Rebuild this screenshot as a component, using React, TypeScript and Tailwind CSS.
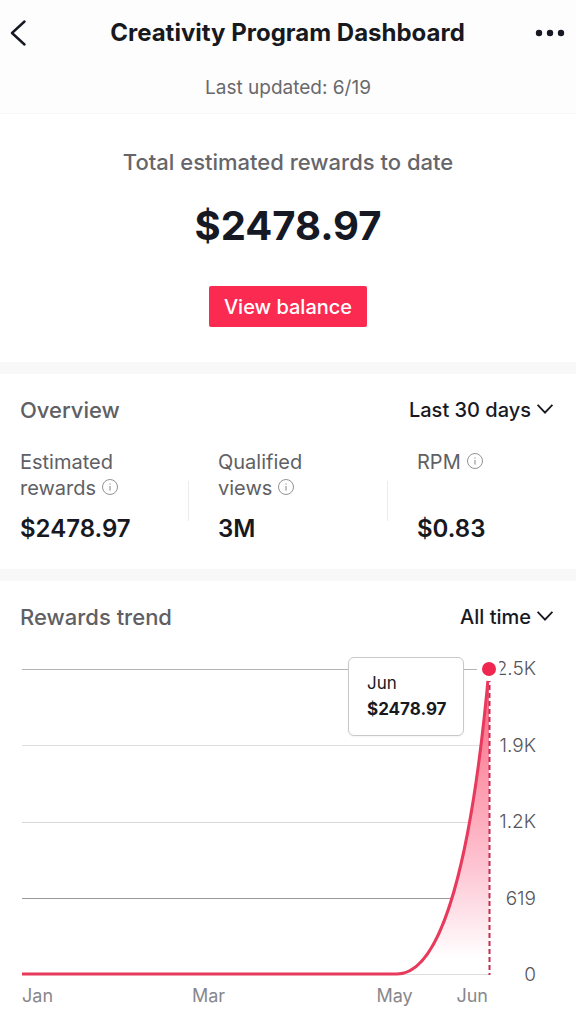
import { useState } from "react";

const metrics = [
  { id: "rewards", lines: ["Estimated", "rewards"], value: "$2478.97" },
  { id: "views", lines: ["Qualified", "views"], value: "3M" },
  { id: "rpm", lines: ["RPM"], value: "$0.83" },
];

const yLabels = ["2.5K", "1.9K", "1.2K", "619", "0"];

const gridLines = [
  { y: 0, color: "#b4b4b6" },
  { y: 76, color: "#dedee0" },
  { y: 153, color: "#d8d8da" },
  { y: 229, color: "#98989a" },
  { y: 305, color: "#dedee0" },
];

function InfoIcon() {
  return (
    <svg viewBox="0 0 16 16" className="mb-[2px] h-4 w-4" fill="none" stroke="#77777a" aria-hidden="true">
      <circle cx="8" cy="8" r="7.5" strokeWidth="0.8" />
      <path d="M8 7v4.6" strokeWidth="0.9" />
      <path d="M8 4.4v1.2" strokeWidth="1.1" />
    </svg>
  );
}

interface PeriodSelectProps {
  label: string;
  options: string[];
}

function PeriodSelect({ label, options }: PeriodSelectProps) {
  const [value, setValue] = useState(options[0]);

  return (
    <div className="flex items-center gap-[6px]">
      <select
        aria-label={label}
        value={value}
        onChange={(e) => setValue(e.target.value)}
        className="field-sizing-content appearance-none bg-transparent text-right text-xl font-medium text-[#18191f]"
      >
        {options.map((option) => (
          <option key={option}>{option}</option>
        ))}
      </select>
      <svg viewBox="0 0 16 10" className="mb-[2px] h-[10px] w-4" fill="none" stroke="#18191f" strokeWidth="1.9" aria-hidden="true">
        <path d="M0.6 0.8 8 8.6l7.4-7.8" />
      </svg>
    </div>
  );
}

function TrendChart() {
  return (
    <div className="mt-9 pr-10 pl-[22px]">
      <div className="flex">
        <div className="relative h-[306px] flex-1">
          <svg viewBox="0 0 468 306" preserveAspectRatio="none" className="h-full w-full overflow-visible" aria-hidden="true">
            <defs>
              <linearGradient id="trendFill" x1="0" y1="0" x2="0" y2="1">
                <stop offset="0" stopColor="#fb5877" />
                <stop offset="0.3" stopColor="#fd8ea3" />
                <stop offset="0.65" stopColor="#fdc5d3" />
                <stop offset="0.95" stopColor="#ffffff" />
              </linearGradient>
            </defs>
            {gridLines.map((line) => (
              <path key={line.y} d={`M0 ${line.y + 0.5}H468`} stroke={line.color} />
            ))}
            <path d="M375 305C420 305 450 190 467 0V305Z" fill="url(#trendFill)" />
            <path d="M467.5 0V306" stroke="#c62c50" strokeWidth="2" strokeDasharray="5 3" fill="none" />
            <path d="M0 305H375C420 305 450 190 467 0" stroke="#e73a5d" strokeWidth="3" fill="none" />
          </svg>
          <div className="absolute -top-3 right-[26px] h-[79px] w-[116px] rounded-md border border-[#c9c9cb] bg-white pt-[13px] pl-[18px] text-[17px] text-[#18191f] shadow-xs">
            <p className="leading-6">Jun</p>
            <p className="leading-7 font-bold">$2478.97</p>
          </div>
        </div>
        <div className="-my-3 flex w-[46px] flex-col justify-between text-right text-[19px] leading-6 font-light text-[#56565a]">
          {yLabels.map((label) => (
            <span key={label}>{label}</span>
          ))}
        </div>
        {/* marker for the selected month, sits over the axis label */}
        <div className="relative">
          <span className="absolute -top-3 right-[35px] flex h-6 w-6 items-center justify-center rounded-full bg-white">
            <span className="h-[14px] w-[14px] rounded-full bg-[#ee2650]" />
          </span>
        </div>
      </div>
      <div className="mt-[9px] flex pr-12 text-lg leading-6 text-[#88888b]">
        <span className="w-[170px]">Jan</span>
        <span className="flex-1">Mar</span>
        <span className="w-20">May</span>
        <span>Jun</span>
      </div>
    </div>
  );
}

function App() {
  return (
    <main className="min-h-screen bg-white font-['Inter','Liberation_Sans',sans-serif] text-[#18191f]">
      <header className="bg-[#fdfdfd] pb-[11px]">
        <div className="flex h-[65px] items-center justify-between pr-[11px] pl-[10px]">
          <button type="button" aria-label="Back" className="w-[30px]">
            <svg viewBox="0 0 16 26" className="h-[26px] w-4" fill="none" stroke="#161823" strokeWidth="2.4" strokeLinecap="round" strokeLinejoin="round">
              <path d="M14.5 1.5 2 13l12.5 11.5" />
            </svg>
          </button>
          <h1 className="text-2xl font-bold">Creativity Program Dashboard</h1>
          <button type="button" aria-label="More options" className="w-[30px]">
            <svg viewBox="0 0 30 8" className="h-2 w-[30px]" fill="#161823">
              <circle cx="4" cy="4" r="3.2" />
              <circle cx="15" cy="4" r="3.2" />
              <circle cx="26" cy="4" r="3.2" />
            </svg>
          </button>
        </div>
        <p className="pt-[9px] text-center text-[19px] leading-7 text-[#69696c]">Last updated: 6/19</p>
      </header>

      <section className="flex flex-col items-center border-t border-[#f8f8f8] pt-8 pb-[35px]">
        <h2 className="text-[22px] leading-8 font-medium text-[#66666a]">Total estimated rewards to date</h2>
        <p className="mt-7 text-[40px] leading-10 font-bold text-[#161823]">$2478.97</p>
        <button type="button" className="mt-10 h-[41px] rounded-xs bg-[#fb2a51] px-[15px] text-xl font-medium text-white">
          View balance
        </button>
      </section>

      <section className="border-t-12 border-[#f8f8f8] pt-5 pb-6">
        <div className="flex h-8 items-center justify-between pr-[23px] pl-5">
          <h2 className="text-[22px] font-medium text-[#606064]">Overview</h2>
          <PeriodSelect label="Overview period" options={["Last 30 days", "Last 7 days", "All time"]} />
        </div>
        <div className="mt-[23px] grid grid-cols-[168px_199px_1fr] pl-5">
          {metrics.map((metric, index) => (
            <div key={metric.id} className={index > 0 ? "flex" : ""}>
              {index > 0 && <span className="mt-8 h-10 w-px bg-[#ececee]" />}
              <dl className={index > 0 ? "pl-[29px]" : ""}>
                <dt className="h-[52px] text-xl leading-[26px] text-[#606064]">
                  {metric.lines.map((line, i) => (
                    <span key={line} className="flex items-center gap-[6px]">
                      {line}
                      {i === metric.lines.length - 1 && <InfoIcon />}
                    </span>
                  ))}
                </dt>
                <dd className="mt-3 text-2xl leading-8 font-semibold">{metric.value}</dd>
              </dl>
            </div>
          ))}
        </div>
      </section>

      <section className="border-t-12 border-[#f8f8f8] pt-5 pb-4">
        <div className="flex h-8 items-center justify-between pr-[23px] pl-5">
          <h2 className="text-[22px] font-medium text-[#606064]">Rewards trend</h2>
          <PeriodSelect label="Rewards trend period" options={["All time", "Last 30 days"]} />
        </div>
        <TrendChart />
      </section>
    </main>
  );
}

export default App;
